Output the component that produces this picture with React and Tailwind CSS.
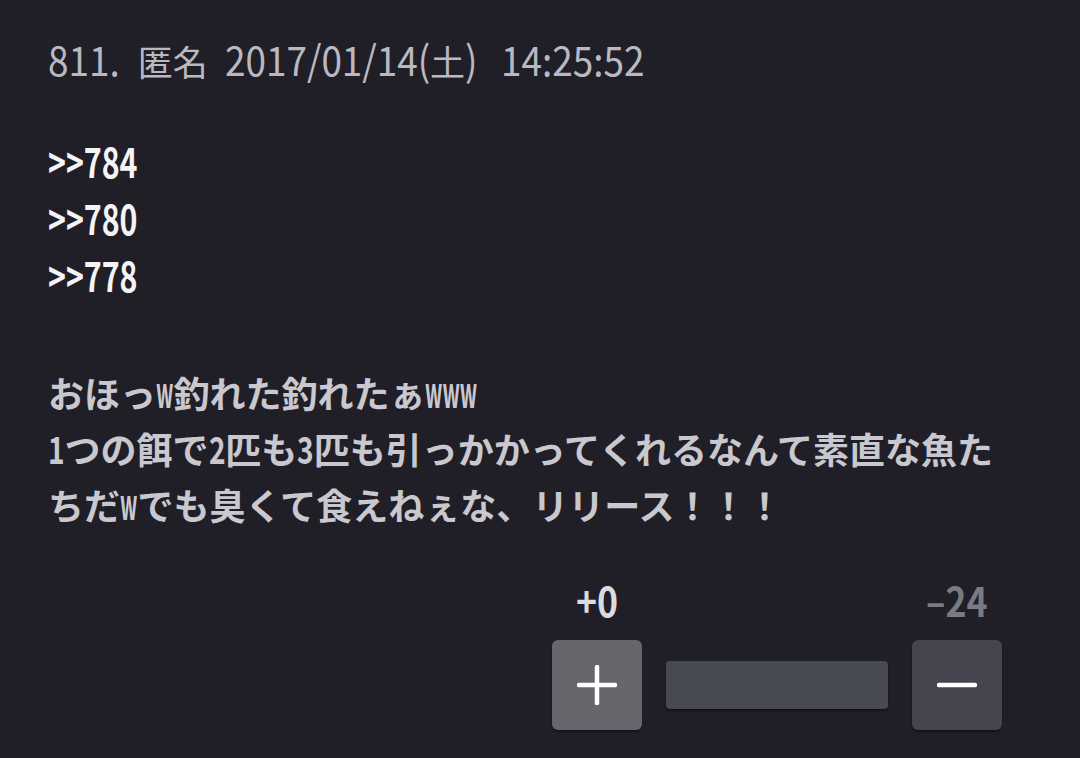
import { useLayoutEffect, useRef, useState } from "react";

// condensed latin run: squeezed horizontally, box width follows the squeezed glyphs
function Cond({ children, className = "" }) {
  const inner = useRef(null);
  const [w, setW] = useState(null);

  useLayoutEffect(() => {
    if (inner.current) setW(inner.current.getBoundingClientRect().width);
  }, [children]);

  return (
    <span className="inline-block whitespace-pre" style={w ? { width: w } : undefined}>
      <span ref={inner} className={"inline-block origin-left leading-none " + className}>
        {children}
      </span>
    </span>
  );
}

export default function App() {
  const font = { fontFamily: '"Noto Sans CJK JP", "Noto Sans", sans-serif' };
  const hd = "text-[41px] scale-x-[0.9]";
  const bd = "text-[38px] scale-x-[0.74]";
  const bw = "text-[42px] scale-x-[0.48]";
  const rp = "text-[41px] scale-x-[0.74]";

  return (
    <div className="w-[1080px] h-[758px] bg-[#201f28] overflow-hidden pl-12 pr-[78px] pt-[33px]" style={font}>
      {/* header */}
      <div className="text-[35px] leading-[56px] text-[#bab9c1] whitespace-nowrap">
        <Cond className={hd}>811.</Cond>
        <span className="ml-[18px]">匿名</span>
        <span className="ml-[17px]"><Cond className={hd}>2017/01/14(</Cond></span>
        <span>土</span>
        <Cond className={hd}>)</Cond>
        <span className="ml-[24px]"><Cond className={hd}>14:25:52</Cond></span>
      </div>

      {/* anchors */}
      <div className="mt-[43px] text-[41px] leading-[57px] font-bold text-[#f4f4f6]">
        <div><Cond className={rp}>&gt;&gt;784</Cond></div>
        <div><Cond className={rp}>&gt;&gt;780</Cond></div>
        <div><Cond className={rp}>&gt;&gt;778</Cond></div>
      </div>

      {/* body */}
      <div className="mt-[61px] text-[36px] leading-[56px] font-bold text-[#c9c8ce] whitespace-nowrap">
        <div>
          おほっ<Cond className={bw}>w</Cond>釣れた釣れたぁ<Cond className={bw}>www</Cond>
        </div>
        <div>
          <Cond className={bd}>1</Cond>つの餌で<Cond className={bd}>2</Cond>匹も<Cond className={bd}>3</Cond>匹も引っかかってくれるなんて素直な魚た
        </div>
        <div>
          ちだ<Cond className={bw}>w</Cond>でも臭くて食えねぇな、リリース！！！
        </div>
      </div>

      {/* votes */}
      <div className="mt-[47px] flex justify-end">
        <div className="flex flex-col gap-5">
          <div className="flex gap-6 text-[41px] leading-[40px] font-bold">
            <div className="w-[90px] text-center text-[#dcdce0]">
              <Cond className="text-[41px] scale-x-[0.87]">+0</Cond>
            </div>
            <div className="w-[222px]" />
            <div className="w-[90px] text-center text-[#7b7a82]">
              <Cond className="text-[41px] scale-x-[0.87]">–24</Cond>
            </div>
          </div>
          <div className="flex items-center gap-6">
            <button className="w-[90px] h-[90px] rounded-md bg-[#67666d] shadow-[0_2px_2px_rgba(0,0,0,0.4)] flex items-center justify-center">
              <svg width="40" height="40" viewBox="0 0 40 40">
                <path d="M20 2v36M2 20h36" stroke="#ffffff" strokeWidth="4.5" strokeLinecap="round" />
              </svg>
            </button>
            <div className="w-[222px] h-12 rounded bg-[#474953] shadow-[0_2px_2px_rgba(0,0,0,0.4)]" />
            <button className="w-[90px] h-[90px] rounded-md bg-[#45454f] shadow-[0_2px_2px_rgba(0,0,0,0.4)] flex items-center justify-center">
              <svg width="40" height="40" viewBox="0 0 40 40">
                <path d="M2 20h36" stroke="#ffffff" strokeWidth="4.5" strokeLinecap="round" />
              </svg>
            </button>
          </div>
        </div>
      </div>
    </div>
  );
}
